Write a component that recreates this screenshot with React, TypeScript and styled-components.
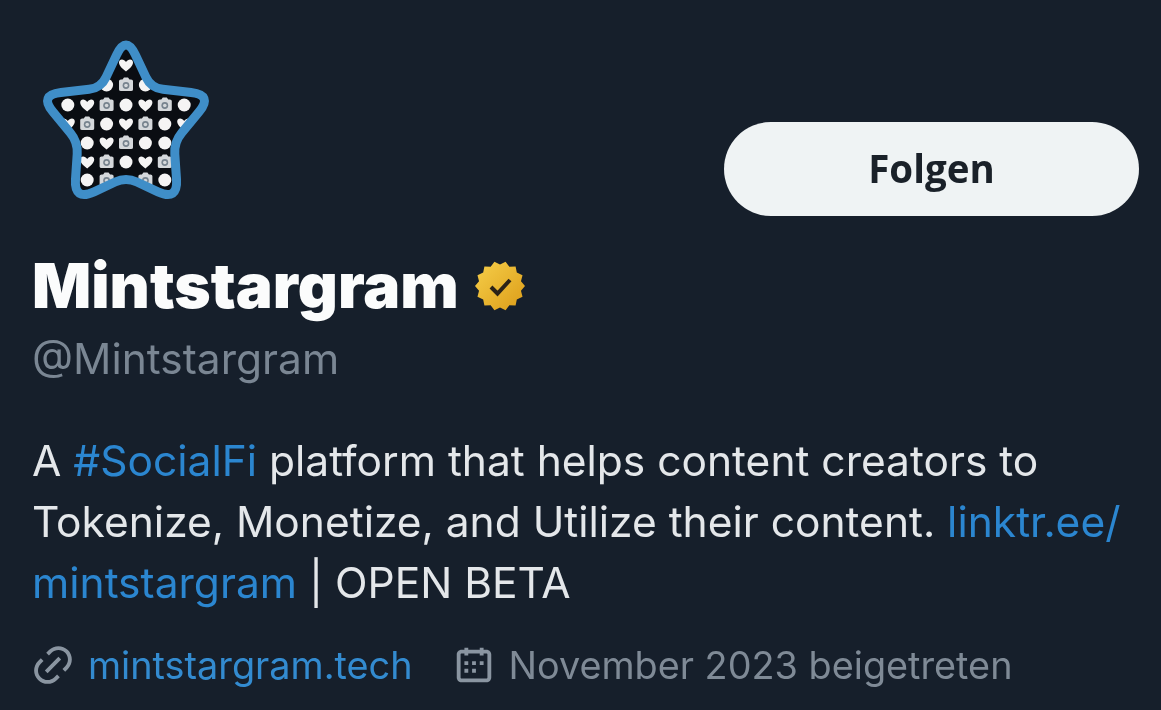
import React from "react";
import styled, { createGlobalStyle } from "styled-components";

const Global = createGlobalStyle`
  html, body { margin: 0; padding: 0; background: #161f2b; }
`;

const Page = styled.main`
  width: 1161px;
  height: 710px;
  box-sizing: border-box;
  overflow: hidden;
  padding: 38px 22px 0 32px;
  background: #161f2b;
  color: #e8ebee;
  font-family: Inter, "Liberation Sans", sans-serif;
  filter: blur(0.6px);
`;

const Header = styled.header`
  display: flex;
  justify-content: space-between;
  align-items: flex-end;
  height: 178px;
`;

const Logo = styled.svg`
  display: block;
  width: 174px;
  height: 161px;
  margin-left: 6px;
  align-self: flex-start;
  overflow: visible;
`;

const FollowButton = styled.button`
  width: 415px;
  height: 94px;
  border: 0;
  border-radius: 47px;
  background: #eff3f4;
  color: #1a2129;
  font-family: "Open Sans", sans-serif;
  font-size: 38.5px;
  font-weight: 700;
  padding: 0 0 2px;
`;

const NameRow = styled.div`
  display: flex;
  align-items: center;
  gap: 18px;
  margin-top: 35px;
  height: 70px;
`;

const Name = styled.h1`
  margin: 0;
  font-size: 62px;
  font-weight: 900;
  line-height: 70px;
  color: #fbfcfc;
`;

const Badge = styled.svg`
  display: block;
  width: 54px;
  height: 54px;
  margin-left: -4px;
`;

const Handle = styled.div`
  margin-top: 14px;
  font-size: 42.5px;
  line-height: 48px;
  color: #7a8693;
`;

const Bio = styled.p`
  margin: 47px 0 0;
  font-size: 42.5px;
  line-height: 61px;
  color: #e4e7ea;
  white-space: nowrap;
`;

const Tag = styled.span`
  color: #2b86d0;
`;

const Meta = styled.div`
  display: flex;
  align-items: center;
  margin: 29px 0 0 -2px;
  height: 46px;
  font-size: 37.8px;
  color: #7f8a96;
`;

const MetaItem = styled.span`
  display: flex;
  align-items: center;
  gap: 12px;
  margin-right: 38px;
  white-space: nowrap;
`;

const MetaIcon = styled.svg`
  display: block;
  width: 46px;
  height: 46px;
  fill: #8a95a1;
  flex: none;
`;

const MetaLink = styled.span`
  color: #338bd0;
`;

type Glyph = "c" | "h" | "k";

const rows: { y: number; items: [number, Glyph][] }[] = [
  { y: 27, items: [[0, "h"]] },
  { y: 47, items: [[-1, "c"], [0, "k"], [1, "c"]] },
  { y: 67, items: [[-3, "c"], [-2, "h"], [-1, "k"], [0, "c"], [1, "h"], [2, "k"], [3, "c"]] },
  { y: 86, items: [[-3, "h"], [-2, "k"], [-1, "c"], [0, "h"], [1, "k"], [2, "c"], [3, "h"]] },
  { y: 105, items: [[-2, "c"], [-1, "h"], [0, "k"], [1, "c"], [2, "c"]] },
  { y: 124, items: [[-2, "h"], [-1, "k"], [0, "c"], [1, "h"], [2, "k"]] },
  { y: 142, items: [[-2, "c"], [-1, "k"], [1, "k"], [2, "c"]] },
];

const vertices: [number, number, number][] = [
  [88, -3, 22],
  [113, 50, 12],
  [175, 57, 22],
  [136, 104, 12],
  [140, 163, 22],
  [88, 139, 12],
  [36, 163, 22],
  [40, 104, 12],
  [1, 57, 22],
  [63, 50, 12],
];

function roundedStar() {
  const n = vertices.length;
  let d = "";
  vertices.forEach(([x, y, t], i) => {
    const [px, py] = vertices[(i + n - 1) % n];
    const [nx, ny] = vertices[(i + 1) % n];
    const lp = Math.hypot(px - x, py - y);
    const ln = Math.hypot(nx - x, ny - y);
    const ax = x + ((px - x) / lp) * t;
    const ay = y + ((py - y) / lp) * t;
    const bx = x + ((nx - x) / ln) * t;
    const by = y + ((ny - y) / ln) * t;
    d += `${i === 0 ? "M" : "L"}${ax.toFixed(1)} ${ay.toFixed(1)} Q${x} ${y} ${bx.toFixed(1)} ${by.toFixed(1)} `;
  });
  return d + "Z";
}

const STAR = roundedStar();

function Cell({ x, y, kind }: { x: number; y: number; kind: Glyph }) {
  if (kind === "c") return <circle cx={x} cy={y} r={6.5} fill="#f5f4f4" />;
  if (kind === "h")
    return (
      <path
        transform={`translate(${x} ${y})`}
        d="M0 6.5 C-3 4 -7 1 -7 -2.5 C-7 -6.5 -2 -6.5 0 -3 C2 -6.5 7 -6.5 7 -2.5 C7 1 3 4 0 6.5 Z"
        fill="#f5f4f4"
      />
    );
  return (
    <g transform={`translate(${x} ${y})`}>
      <path d="M-7 -4 Q-7 -5.5 -5 -5.5 H-3.5 L-2 -7.5 H2 L3.5 -5.5 H5 Q7 -5.5 7 -4 V4.5 Q7 6 5 6 H-5 Q-7 6 -7 4.5 Z" fill="#d5d8db" />
      <circle r={3.4} cy={0.5} fill="#77838e" />
      <circle r={1.8} cy={0.5} fill="#d5d8db" />
    </g>
  );
}

function StarLogo() {
  return (
    <Logo viewBox="0 0 174 161">
      <defs>
        <clipPath id="star-clip">
          <path d={STAR} />
        </clipPath>
      </defs>
      <path d={STAR} fill="#0a0d12" />
      <g clipPath="url(#star-clip)">
        {rows.map((row) =>
          row.items.map(([col, kind]) => (
            <Cell key={`${row.y}-${col}`} x={88 + col * 19.4} y={row.y} kind={kind} />
          ))
        )}
      </g>
      <path d={STAR} fill="none" stroke="#3f8ec8" strokeWidth={9} strokeLinejoin="round" />
    </Logo>
  );
}

const badgePoints = Array.from({ length: 28 }, (_, i) => {
  const r = i % 2 === 0 ? 25 : 21.5;
  const a = (i / 28) * Math.PI * 2;
  return `${27 + r * Math.cos(a)},${27 + r * Math.sin(a)}`;
}).join(" ");

function VerifiedBadge() {
  return (
    <Badge viewBox="0 0 54 54">
      <defs>
        <linearGradient id="gold" x1="0" y1="0" x2="1" y2="1">
          <stop offset="0" stopColor="#f6cf4a" />
          <stop offset="1" stopColor="#dc9c18" />
        </linearGradient>
      </defs>
      <polygon points={badgePoints} fill="url(#gold)" />
      <path d="M18 28 L24.5 34.5 L37 21" fill="none" stroke="#2a2218" strokeWidth={4} />
    </Badge>
  );
}

export default function App() {
  return (
    <Page>
      <Global />
      <Header>
        <StarLogo />
        <FollowButton>Folgen</FollowButton>
      </Header>
      <NameRow>
        <Name>Mintstargram</Name>
        <VerifiedBadge />
      </NameRow>
      <Handle>@Mintstargram</Handle>
      <Bio>
        A <Tag>#SocialFi</Tag> platform that helps content creators to
        <br />
        Tokenize, Monetize, and Utilize their content. <Tag>linktr.ee/</Tag>
        <br />
        <Tag>mintstargram</Tag> | OPEN BETA
      </Bio>
      <Meta>
        <MetaItem>
          <MetaIcon viewBox="0 0 24 24">
            <path d="M18.36 5.64c-1.95-1.96-5.11-1.96-7.07 0L9.88 7.05 8.46 5.64l1.42-1.42c2.73-2.73 7.16-2.73 9.9 0 2.73 2.74 2.73 7.17 0 9.9l-1.42 1.42-1.41-1.42 1.41-1.41c1.96-1.96 1.96-5.12 0-7.07zm-2.12 3.53l-7.07 7.07-1.41-1.41 7.07-7.07 1.41 1.41zm-12.02.71l1.42-1.42 1.41 1.42-1.41 1.41c-1.96 1.96-1.96 5.12 0 7.07 1.95 1.96 5.11 1.96 7.07 0l1.41-1.41 1.42 1.41-1.42 1.42c-2.73 2.73-7.16 2.73-9.9 0-2.73-2.74-2.73-7.17 0-9.9z" />
          </MetaIcon>
          <MetaLink>mintstargram.tech</MetaLink>
        </MetaItem>
        <MetaItem>
          <MetaIcon viewBox="0 0 24 24">
            <path d="M7 4V3h2v1h6V3h2v1h1.5C19.89 4 21 5.12 21 6.5v12c0 1.38-1.11 2.5-2.5 2.5h-13C4.12 21 3 19.88 3 18.5v-12C3 5.12 4.12 4 5.5 4H7zm0 2H5.5c-.27 0-.5.22-.5.5v12c0 .28.23.5.5.5h13c.28 0 .5-.22.5-.5v-12c0-.28-.22-.5-.5-.5H17v1h-2V6H9v1H7V6zm0 6h2v-2H7v2zm0 4h2v-2H7v2zm4-4h2v-2h-2v2zm0 4h2v-2h-2v2zm4-4h2v-2h-2v2z" />
          </MetaIcon>
          November 2023 beigetreten
        </MetaItem>
      </Meta>
    </Page>
  );
}
